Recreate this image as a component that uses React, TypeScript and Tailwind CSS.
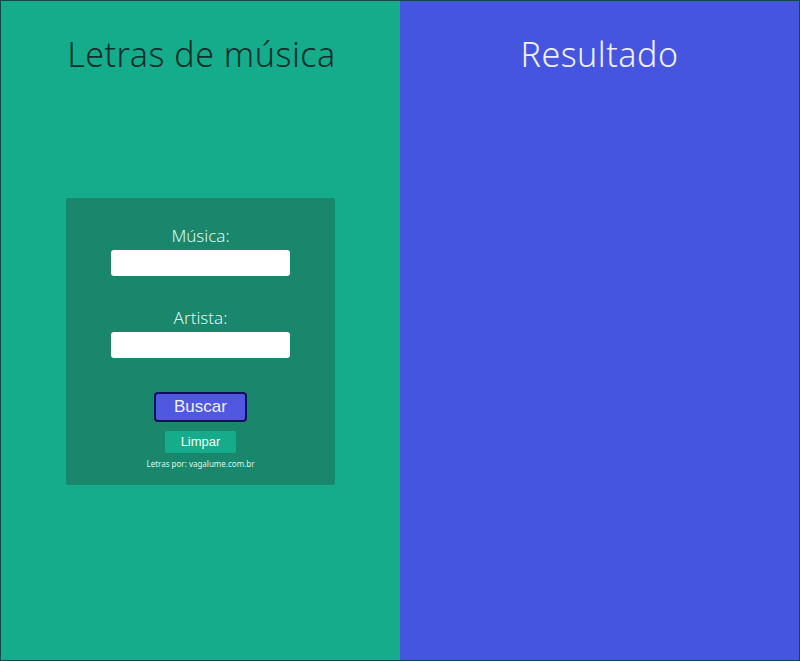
export default function App() {
    return (
        <div
            className="grid grid-cols-[399px_1fr] h-[661px] w-[800px] border border-[#0d4a4a] overflow-hidden"
            style={{ fontFamily: "'Noto Sans', 'Open Sans', sans-serif" }}
        >
            <section className="bg-[#14ac8b] flex flex-col items-center">
                <h1 className="mt-[31px] text-[34px] leading-[44px] font-light text-[#0e2f2c] tracking-[0.5px] pl-[2px]">
                    Letras de música
                </h1>

                <form
                    className="mt-[122px] w-[269px] h-[287px] bg-[#1a876c] rounded-[2px] flex flex-col items-center pt-[26px]"
                    onSubmit={(e) => e.preventDefault()}
                >
                    <label className="text-[17px] leading-[24px] font-light text-[#d9f7ee]">Música:</label>
                    <input className="mt-[2px] w-[179px] h-[26px] bg-white rounded-[3px] outline-none" />

                    <label className="mt-[30px] text-[17px] leading-[24px] font-light text-[#d9f7ee]">Artista:</label>
                    <input className="mt-[2px] w-[179px] h-[26px] bg-white rounded-[3px] outline-none" />

                    <button
                        type="submit"
                        className="mt-[34px] w-[93px] h-[30px] bg-[#4f58de] border-2 border-[#12105a] rounded-[4px] text-[17px] text-[#eef0ff]"
                        style={{ fontFamily: "'Liberation Sans', Arial, sans-serif" }}
                    >
                        Buscar
                    </button>
                    <button
                        type="button"
                        className="mt-[9px] w-[71px] h-[22px] bg-[#16ab8a] rounded-[2px] text-[13px] text-[#f2fffb]"
                        style={{ fontFamily: "'Liberation Sans', Arial, sans-serif" }}
                    >
                        Limpar
                    </button>
                    <p className="mt-[5px] text-[8px] leading-[12px] text-[#d9f7ee]">Letras por: vagalume.com.br</p>
                </form>
            </section>

            <section className="bg-[#4655e0] flex flex-col items-center">
                <h1 className="mt-[31px] text-[34px] leading-[44px] font-light text-[#eef0ff] tracking-[0.5px]">
                    Resultado
                </h1>
            </section>
        </div>
    );
}
